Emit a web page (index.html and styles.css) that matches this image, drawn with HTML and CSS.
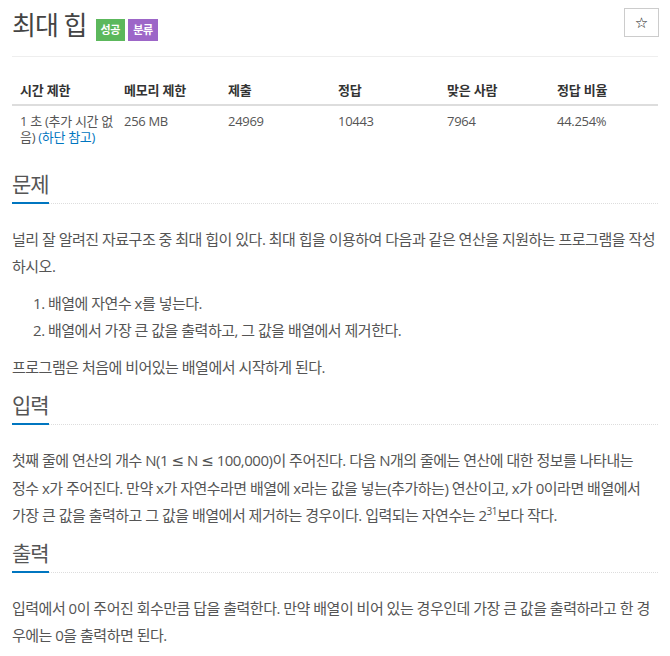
FILE: index.html
```html
<!DOCTYPE html>
<html>
<head>
  <title>최대 힙</title>
  <link rel="stylesheet" href="styles.css">
</head>
<body>
  <div class="container">
    <div class="page-header">
      <h1>
        <span class="problem-title">최대 힙</span>
        <span class="label label-success">성공</span>
        <span class="label label-purple">분류</span>
      </h1>
      <button class="star-btn">☆</button>
    </div>

    <table class="problem-info">
      <thead>
        <tr>
          <th class="col-a">시간 제한</th>
          <th class="col-a">메모리 제한</th>
          <th class="col-b">제출</th>
          <th class="col-c">정답</th>
          <th class="col-b">맞은 사람</th>
          <th>정답 비율</th>
        </tr>
      </thead>
      <tbody>
        <tr>
          <td>1 초 (추가 시간 없음) <a href="#">(하단 참고)</a></td>
          <td>256 MB</td>
          <td>24969</td>
          <td>10443</td>
          <td>7964</td>
          <td>44.254%</td>
        </tr>
      </tbody>
    </table>

    <section class="problem-section">
      <div class="headline"><h2>문제</h2></div>
      <div class="problem-text">
        <p>널리 잘 알려진 자료구조 중 최대 힙이 있다. 최대 힙을 이용하여 다음과 같은 연산을 지원하는 프로그램을 작성하시오.</p>
        <ol>
          <li>배열에 자연수 x를 넣는다.</li>
          <li>배열에서 가장 큰 값을 출력하고, 그 값을 배열에서 제거한다.</li>
        </ol>
        <p>프로그램은 처음에 비어있는 배열에서 시작하게 된다.</p>
      </div>
    </section>

    <section class="problem-section">
      <div class="headline"><h2>입력</h2></div>
      <div class="problem-text">
        <p class="keep-words">첫째 줄에 연산의 개수 N(1 <span class="op">≤</span> N <span class="op">≤</span> 100,000)이 주어진다. 다음 N개의 줄에는 연산에 대한 정보를 나타내는 정수 x가 주어진다. 만약 x가 자연수라면 배열에 x라는 값을 넣는(추가하는) 연산이고, x가 0이라면 배열에서 가장 큰 값을 출력하고 그 값을 배열에서 제거하는 경우이다. 입력되는 자연수는 2<sup>31</sup>보다 작다.</p>
      </div>
    </section>

    <section class="problem-section">
      <div class="headline"><h2>출력</h2></div>
      <div class="problem-text">
        <p>입력에서 0이 주어진 회수만큼 답을 출력한다. 만약 배열이 비어 있는 경우인데 가장 큰 값을 출력하라고 한 경우에는 0을 출력하면 된다.</p>
      </div>
    </section>
  </div>
</body>
</html>
```

FILE: styles.css
```css
body {
  margin: 0;
  font-family: "Open Sans", "Noto Sans CJK KR", sans-serif;
  font-size: 14px;
  color: #555;
  background: #fff;
}

.container {
  padding: 0 12px;
}

.page-header {
  display: flex;
  justify-content: space-between;
  align-items: flex-start;
  padding: 8px 0 14px;
  border-bottom: 1px solid #eee;
  margin-bottom: 15px;
}

.page-header h1 {
  margin: 0;
  font-weight: normal;
  line-height: 34px;
  display: flex;
  align-items: center;
}

.problem-title {
  font-size: 26px;
  letter-spacing: -1px;
  color: #444;
  margin-right: 9px;
}

.label {
  display: inline-block;
  font-size: 11px;
  font-weight: bold;
  color: #fff;
  line-height: 22px;
  padding: 0 5px;
  margin-top: 9px;
  margin-right: 3px;
  letter-spacing: -0.3px;
}

.label-success {
  background-color: #5cb85c;
}

.label-purple {
  background-color: #9d66c8;
}

.star-btn {
  width: 35px;
  height: 29px;
  margin-right: -1px;
  background: #fff;
  border: 1px solid #ccc;
  color: #111;
  font-family: "DejaVu Sans", sans-serif;
  font-size: 15px;
  padding: 0;
}

.problem-info {
  width: 100%;
  table-layout: fixed;
  border-collapse: collapse;
  margin-bottom: 17px;
}

.problem-info th,
.problem-info td {
  box-sizing: border-box;
  text-align: left;
  font-size: 13px;
  vertical-align: top;
}

.problem-info .col-a {
  width: 104px;
}

.problem-info .col-b {
  width: 110px;
}

.problem-info .col-c {
  width: 109px;
}

.problem-info th {
  color: #333;
  line-height: 20px;
  padding: 8px 0 4px 8px;
  border-bottom: 2px solid #ddd;
  letter-spacing: -0.2px;
}

.problem-info td {
  line-height: 16px;
  padding: 7px 0 8px 8px;
  letter-spacing: -0.3px;
}

a {
  color: #0076c0;
  text-decoration: none;
}

.problem-section {
  margin-bottom: 10px;
}

.headline {
  border-bottom: 1px dotted #ddd;
  margin: 0 0 22px;
}

.headline h2 {
  display: inline-block;
  margin: 0 0 -1px;
  padding-bottom: 4px;
  border-bottom: 2px solid #0076c0;
  font-size: 21px;
  font-weight: normal;
  line-height: 28px;
  letter-spacing: -1px;
  color: #555;
}

.problem-text {
  font-size: 15px;
  line-height: 27px;
  letter-spacing: -0.5px;
}

.problem-text p {
  margin: 0 0 10px;
}

.problem-text .keep-words {
  word-break: keep-all;
}

.problem-text ol {
  margin: 0 0 10px;
  padding-left: 36px;
}

.problem-text .op {
  font-family: "DejaVu Sans", sans-serif;
}

.problem-text sup {
  line-height: 0;
  font-size: 10px;
}
```
